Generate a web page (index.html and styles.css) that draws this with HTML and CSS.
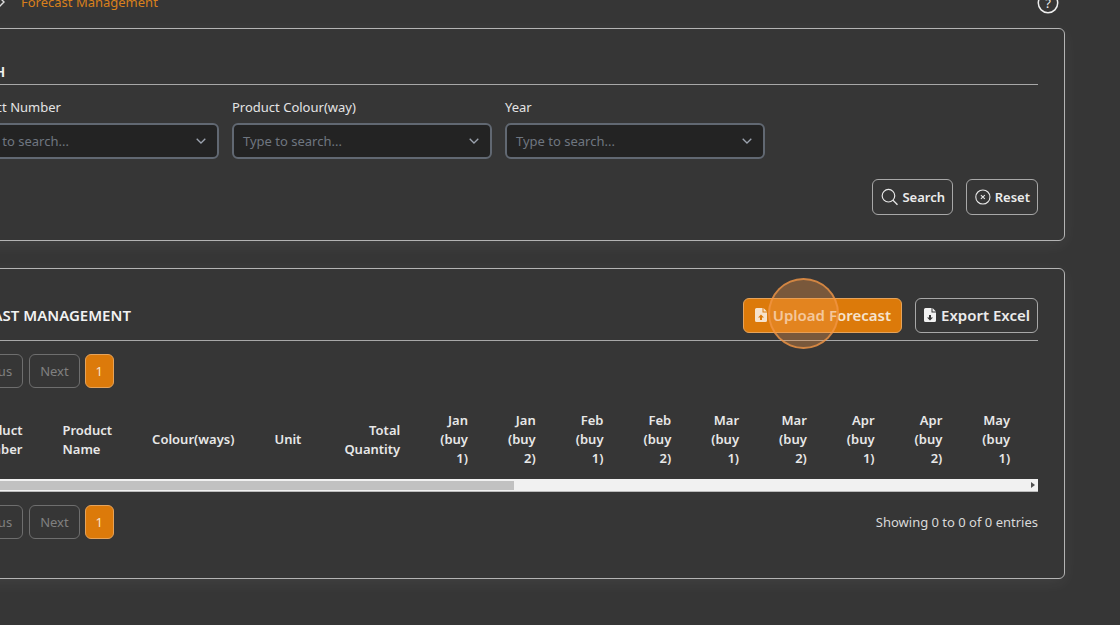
FILE: index.html
```html
<!DOCTYPE html>
<html lang="en">
<head>
	<meta charset="UTF-8">
	<title>Forecast Management</title>
	<link rel="stylesheet" href="styles.css">
</head>
<body>
	<div id="wrapper">
		<div class="crumbs">
			<div class="crumb-trail">
				<svg class="crumb-chevron" width="8" height="12" viewBox="0 0 8 12"><path d="M1 1l5 5-5 5" fill="none" stroke="#ddd" stroke-width="1.4"/></svg>
				<span class="crumb-current">Forecast Management</span>
			</div>
			<svg class="help" width="22" height="22" viewBox="0 0 22 22"><circle cx="11" cy="11" r="9.7" fill="none" stroke="#eee" stroke-width="1.5"/><text x="11" y="15.5" text-anchor="middle" class="help-mark">?</text></svg>
		</div>

		<section class="card card-search">
			<h2 class="card-title">SEARCH</h2>
			<div class="filters">
				<div class="filter">
					<label>Product Number</label>
					<div class="select"><span>Type to search...</span><svg width="10" height="6" viewBox="0 0 10 6"><path d="M.7.7L5 5l4.3-4.3" fill="none" stroke="#9ca3af" stroke-width="1.3"/></svg></div>
				</div>
				<div class="filter">
					<label>Product Colour(way)</label>
					<div class="select"><span>Type to search...</span><svg width="10" height="6" viewBox="0 0 10 6"><path d="M.7.7L5 5l4.3-4.3" fill="none" stroke="#9ca3af" stroke-width="1.3"/></svg></div>
				</div>
				<div class="filter">
					<label>Year</label>
					<div class="select"><span>Type to search...</span><svg width="10" height="6" viewBox="0 0 10 6"><path d="M.7.7L5 5l4.3-4.3" fill="none" stroke="#9ca3af" stroke-width="1.3"/></svg></div>
				</div>
			</div>
			<div class="search-actions">
				<button class="btn btn-search">
					<svg width="18" height="18" viewBox="0 0 18 18"><circle cx="7.7" cy="7.7" r="6.5" fill="none" stroke="#e8e8e8" stroke-width="1.2"/><path d="M12.4 12.4l4.6 4.6" stroke="#e8e8e8" stroke-width="1.3"/></svg>
					Search
				</button>
				<button class="btn btn-reset">
					<svg width="16" height="16" viewBox="0 0 16 16"><circle cx="8" cy="8" r="7.2" fill="none" stroke="#e8e8e8" stroke-width="1.1"/><path d="M6 6l4 4M10 6l-4 4" stroke="#e8e8e8" stroke-width="1.1"/></svg>
					Reset
				</button>
			</div>
		</section>

		<section class="card card-table">
			<div class="card-head">
				<h2 class="card-title">FORECAST MANAGEMENT</h2>
				<div class="head-actions">
					<button class="btn btn-big btn-orange">
						<svg width="12" height="14" viewBox="0 0 12 14"><path d="M1.5 0H7.5V4.5H12V12.5A1.5 1.5 0 0 1 10.5 14H1.5A1.5 1.5 0 0 1 0 12.5V1.5A1.5 1.5 0 0 1 1.5 0Z" fill="#f6e3cd"/><path d="M8.5 0L12 3.5H8.5Z" fill="#f6e3cd"/><path d="M6 6.5L9 9.5H7V12H5V9.5H3Z" fill="#dc7a0a"/></svg>
						Upload Forecast
					</button>
					<button class="btn btn-big btn-export">
						<svg width="12" height="14" viewBox="0 0 12 14"><path d="M1.5 0H7.5V4.5H12V12.5A1.5 1.5 0 0 1 10.5 14H1.5A1.5 1.5 0 0 1 0 12.5V1.5A1.5 1.5 0 0 1 1.5 0Z" fill="#f2f2f2"/><path d="M8.5 0L12 3.5H8.5Z" fill="#f2f2f2"/><path d="M6 12.5L3 9.5H5V7H7V9.5H9Z" fill="#363636"/></svg>
						Export Excel
					</button>
				</div>
			</div>

			<div class="pager pager-top">
				<a class="page-btn">Previous</a>
				<a class="page-btn">Next</a>
				<a class="page-btn page-on">1</a>
			</div>

			<div class="table-clip">
				<table class="grid">
					<thead>
						<tr>
							<th class="num first">Product Number</th>
							<th>Product Name</th>
							<th>Colour(ways)</th>
							<th>Unit</th>
							<th class="num qty">Total Quantity</th>
							<th class="num">Jan (buy 1)</th>
							<th class="num">Jan (buy 2)</th>
							<th class="num">Feb (buy 1)</th>
							<th class="num">Feb (buy 2)</th>
							<th class="num">Mar (buy 1)</th>
							<th class="num">Mar (buy 2)</th>
							<th class="num">Apr (buy 1)</th>
							<th class="num">Apr (buy 2)</th>
							<th class="num">May (buy 1)</th>
							<th class="num">May (buy 2)</th>
						</tr>
					</thead>
				</table>
			</div>
			<div class="scrollbar">
				<div class="scroll-thumb"></div>
				<svg class="scroll-arrow" width="4" height="6" viewBox="0 0 4 6"><path d="M0 0l4 3-4 3z" fill="#505050"/></svg>
			</div>

			<div class="table-foot">
				<div class="pager">
					<a class="page-btn">Previous</a>
					<a class="page-btn">Next</a>
					<a class="page-btn page-on">1</a>
				</div>
				<div class="entries">Showing 0 to 0 of 0 entries</div>
			</div>
		</section>
	</div>
	<div class="click-ring"></div>
</body>
</html>
```

FILE: styles.css
```css
html, body {
	margin: 0;
	height: 100%;
	overflow: hidden;
	background-color: #363636;
	font-family: "Noto Sans", sans-serif;
	font-size: 13px;
	color: #e8e8e8;
}
#wrapper {
	width: 1150px;
	margin: -8px 0 0 -85px;
}
.crumbs {
	display: flex;
	justify-content: space-between;
	align-items: center;
	height: 22px;
	padding: 0 6px 0 83px;
	margin-bottom: 14px;
}
.crumb-trail {
	display: flex;
	align-items: center;
	gap: 15px;
	margin-top: -3px;
}
.crumb-current {
	color: #d9801c;
}
.help-mark {
	font-size: 13px;
	fill: #eee;
	font-family: "Noto Sans", sans-serif;
}
.card {
	box-sizing: border-box;
	border: 1px solid #b4b4b4;
	border-radius: 6px;
	padding: 0 26px;
	box-shadow: 0 4px 16px rgba(255, 255, 255, 0.06);
}
.card-search {
	height: 213px;
	margin-bottom: 27px;
	padding-top: 32px;
}
.card-table {
	height: 311px;
}
.card-title {
	margin: 0;
	font-size: 15px;
	font-weight: 600;
	color: #f2f2f2;
	line-height: 20px;
}
.card-search .card-title {
	border-bottom: 1px solid #a8a8a8;
	padding: 0 0 3px 6px;
}
.card-head .card-title {
	padding-left: 3px;
}
.filters {
	display: flex;
	gap: 13px;
	margin: 12px 0 0 17px;
}
.filter {
	width: 260px;
}
.filter label {
	display: block;
	line-height: 20px;
	margin-bottom: 6px;
	color: #e4e4e4;
}
.select {
	box-sizing: border-box;
	display: flex;
	justify-content: space-between;
	align-items: center;
	height: 36px;
	padding: 0 11px 0 9px;
	background-color: #232323;
	border: 2px solid #616872;
	border-radius: 6px;
	color: #6f7680;
}
.search-actions {
	display: flex;
	justify-content: flex-end;
	gap: 13px;
	margin-top: 20px;
}
.btn {
	box-sizing: border-box;
	display: flex;
	align-items: center;
	height: 36px;
	padding: 0 7px 0 8px;
	gap: 4px;
	background: none;
	border: 1px solid #a8a8a8;
	border-radius: 6px;
	color: #ececec;
	font-family: inherit;
	font-size: 13px;
	font-weight: 600;
}
.btn-search {
	width: 81px;
}
.btn-reset {
	width: 72px;
	gap: 4px;
	padding-left: 8px;
}
.card-head {
	display: flex;
	justify-content: space-between;
	align-items: center;
	height: 72px;
	box-sizing: border-box;
	padding-top: 28px;
	padding-bottom: 7px;
	border-bottom: 1px solid #a8a8a8;
}
.head-actions {
	display: flex;
	gap: 13px;
}
.btn-big {
	justify-content: flex-end;
	height: 35px;
	padding: 0 7px 0 0;
	gap: 5px;
	font-size: 15px;
	font-weight: 600;
}
.btn-export {
	width: 123px;
}
.btn-orange {
	width: 159px;
	padding-right: 10px;
	gap: 6px;
	background-color: #dc7a0a;
	border-color: #e6a35a;
	color: #f6e3cd;
}
.pager {
	display: flex;
	gap: 6px;
}
.pager-top {
	margin: 13px 0 0 7px;
}
.page-btn {
	box-sizing: border-box;
	display: block;
	height: 34px;
	line-height: 32px;
	padding: 0 10px;
	border: 1px solid #6e6e6e;
	border-radius: 6px;
	color: #808080;
}
.page-on {
	width: 29px;
	margin-left: -1px;
	padding: 0;
	text-align: center;
	background-color: #dc7a0a;
	border-color: #e6a35a;
	color: #f6e3cd;
}
.table-clip {
	overflow: hidden;
	margin-top: 14px;
}
.grid {
	border-collapse: collapse;
	width: 1px;
}
.grid th {
	padding: 9px 20px 11px;
	line-height: 19px;
	font-weight: 600;
	text-align: left;
	color: #e8e8e8;
}
.grid th.num {
	text-align: right;
}
.grid th.first {
	padding-left: 28px;
}
.grid th.qty {
	padding-left: 23px;
}
.scrollbar {
	display: flex;
	align-items: center;
	justify-content: flex-end;
	height: 12px;
	padding-right: 3px;
	background-color: #f1f1f1;
	border-bottom: 1px solid #bbb;
	position: relative;
}
.scroll-thumb {
	position: absolute;
	left: 0;
	top: 2px;
	bottom: 1px;
	width: 572px;
	background-color: #c1c1c1;
}
.table-foot {
	display: flex;
	justify-content: space-between;
	align-items: center;
	margin-top: 13px;
	margin-left: 7px;
}
.entries {
	color: #dadada;
}
.click-ring {
	box-sizing: border-box;
	position: absolute;
	left: 768px;
	top: 278px;
	width: 71px;
	height: 71px;
	border-radius: 50%;
	background-color: rgba(240, 150, 70, 0.36);
	border: 2px solid rgba(240, 150, 70, 0.75);
}
```
